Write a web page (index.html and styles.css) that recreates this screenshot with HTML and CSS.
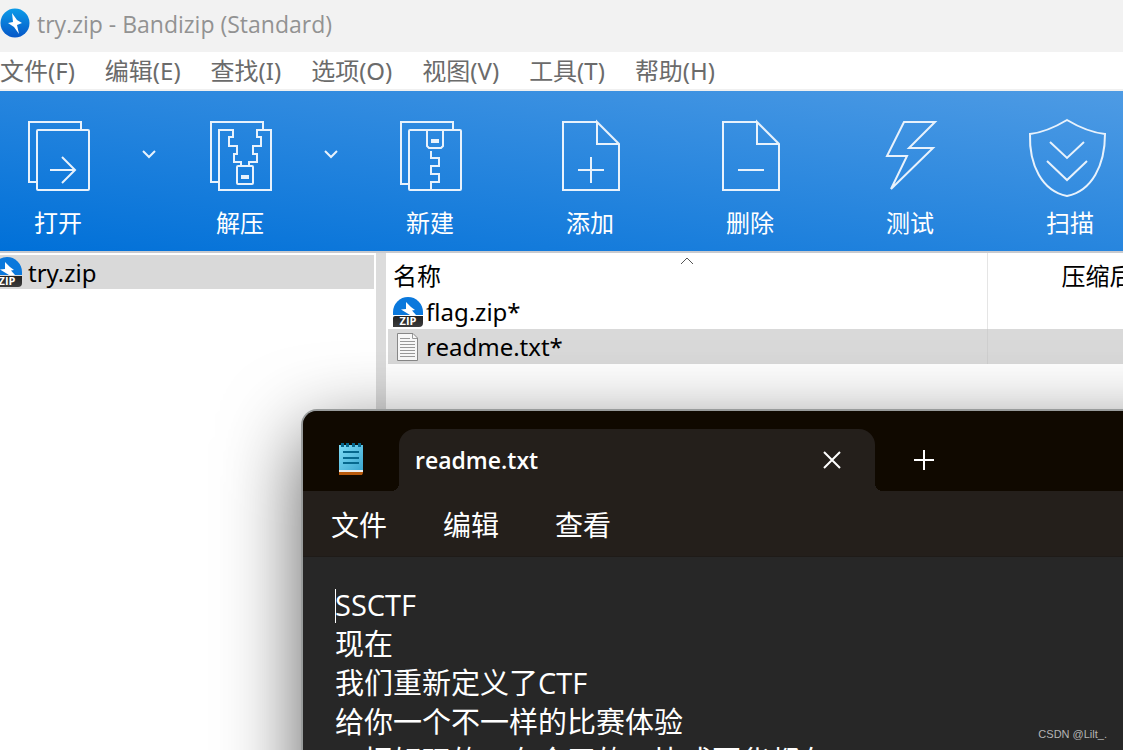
FILE: index.html
```html
<!DOCTYPE html>
<html lang="zh-CN">
<head>
<meta charset="utf-8">
<title>try.zip - Bandizip (Standard)</title>
<link rel="stylesheet" href="styles.css">
</head>
<body>
<svg class="defs" aria-hidden="true">
  <defs>
    <linearGradient id="blue" x1="0" y1="0" x2="0" y2="1"><stop offset="0" stop-color="#0c9be8"/><stop offset="1" stop-color="#0657c8"/></linearGradient>
    <linearGradient id="dark" x1="0" y1="0" x2="0" y2="1"><stop offset="0" stop-color="#222"/><stop offset="1" stop-color="#3c3c3c"/></linearGradient>
    <linearGradient id="paper" x1="0" y1="0" x2="1" y2="1"><stop offset="0" stop-color="#7fdcf7"/><stop offset="1" stop-color="#3ba6cf"/></linearGradient>
    <symbol id="zip" viewBox="0 0 30 30">
      <path d="M0 18V15A15 15 0 0 1 30 15V18Z" fill="#0a78dc"/>
      <path d="M13 5 18 10 22 13 19 13.500 23 18H17L8 12.500 13 12Z" fill="#fff"/>
      <path d="M2 19H30V26Q30 30 26 30H0V21Q0 19 2 19Z" fill="url(#dark)"/>
      <text x="15" y="28" text-anchor="middle" class="zip-label">ZIP</text>
    </symbol>
  </defs>
</svg>
<div class="app">
  <header class="titlebar">
    <svg class="icon30" viewBox="0 0 30 30"><circle cx="15" cy="15" r="14.500" fill="url(#blue)"/><path d="M12 5 17 12 22 15 17 17 19 26 14 19 8 15 13 14Z" fill="#fff"/></svg>
    <h1>try.zip - Bandizip (Standard)</h1>
  </header>
  <nav class="menubar">
    <button>文件(F)</button><button>编辑(E)</button><button>查找(I)</button><button>选项(O)</button><button>视图(V)</button><button>工具(T)</button><button>帮助(H)</button>
  </nav>
  <div class="toolbar">
    <button class="tool first"><svg viewBox="0 0 80 80"><path d="M63 12V4H11V64H19"/><rect x="19" y="12" width="52" height="60" rx="1"/><path d="M32 52H57M44 39 57 52 44 65"/></svg>打开</button>
    <button class="drop" aria-label="打开选项"><svg viewBox="0 0 22 14"><path d="M5 4 11 10 17 4"/></svg></button>
    <button class="tool"><svg viewBox="0 0 80 80"><path d="M63 12V4H11V64H19M41 47V44H34V36H37V28H29V19H33V12H19V72H71V12H57V19H61V28H53V36H57V44H49V47"/><rect x="37" y="48" width="16" height="18" rx="1"/><path class="solid" d="M41 57H49V61H41Z"/></svg>解压</button>
    <button class="drop wide" aria-label="解压选项"><svg viewBox="0 0 22 14"><path d="M5 4 11 10 17 4"/></svg></button>
    <button class="tool"><svg viewBox="0 0 80 80"><path d="M63 12V4H11V66H19"/><rect x="19" y="12" width="52" height="60" rx="1"/><path d="M37 12V28L39 30H51L53 28V12M41 33V40H49V48H41V56H49V64H41V72"/><path class="solid" d="M41 21H49V25H41Z"/></svg>新建</button>
    <button class="tool"><svg viewBox="0 0 80 80"><path d="M47 4H13V72H69V26L47 4V26H69M28 52H54M41 39V65"/></svg>添加</button>
    <button class="tool"><svg viewBox="0 0 80 80"><path d="M47 4H13V72H69V26L47 4V26H69M28 52H54"/></svg>删除</button>
    <button class="tool"><svg viewBox="0 0 80 80"><path d="M34 4H65L39 30H63L21 71 37 38H17Z"/></svg>测试</button>
    <button class="tool"><svg viewBox="0 0 80 80"><path d="M37 2Q17 14 0 16C-1 47 12 73 37 78C62 73 75 47 75 16Q57 14 37 2ZM20 24 37 40 54 24M17 43 37 62 57 43"/></svg>扫描</button>
  </div>
  <main class="content">
    <aside class="tree">
      <button class="node"><svg class="icon30"><use href="#zip"/></svg>try.zip</button>
    </aside>
    <div class="splitter"></div>
    <section class="files">
      <table>
        <colgroup><col class="col-name"><col class="col-size"></colgroup>
        <thead><tr><th>名称<svg class="sort" viewBox="0 0 14 8"><path d="M1 7 7 1 13 7"/></svg></th><th class="size">压缩后</th></tr></thead>
        <tbody>
          <tr><td><div class="file"><svg class="icon30"><use href="#zip"/></svg>flag.zip*</div></td><td></td></tr>
          <tr class="selected"><td><div class="file"><svg class="icon30" viewBox="0 0 30 30"><path d="M4.500 1.500H20L24.500 6V28.500H4.500Z" fill="#f8f8f8" stroke="#888"/><path d="M19.500 2V6.500H24M7 6.500H17M7 9.500H22M7 12.500H22M7 15.500H22M7 18.500H22M7 21.500H22M7 24.500H22" fill="none" stroke="#999"/></svg>readme.txt*</div></td><td></td></tr>
        </tbody>
      </table>
    </section>
  </main>
</div>

<section class="notepad">
  <div class="tabs">
    <svg class="note-icon" viewBox="0 0 26 34"><path d="M1 27H25V31L24 33H1Z" fill="#b85a0c"/><path d="M1 27H25V30H1Z" fill="#eee"/><path d="M1 3H25V28H1Z" fill="url(#paper)"/><path d="M3 1H6V5H3ZM8 1H11V5H8ZM14 1H17V5H14ZM20 1H23V5H20ZM5 9H21V11H5ZM5 15H21V17H5ZM5 20H21V22H5Z" fill="#06688e"/></svg>
    <div class="tab"><span>readme.txt</span><button aria-label="关闭"><svg viewBox="0 0 20 20"><path d="M2 2 18 18M18 2 2 18"/></svg></button></div>
    <button class="add" aria-label="新标签"><svg viewBox="0 0 20 20"><path d="M10 0V20M0 10H20"/></svg></button>
  </div>
  <nav class="note-menu"><button>文件</button><button>编辑</button><button>查看</button></nav>
  <div class="editor">
    <span class="caret"></span>
    <textarea aria-label="readme.txt" spellcheck="false">SSCTF
现在
我们重新定义了CTF
给你一个不一样的比赛体验
一把好玩的一在今天的一比或更华都在</textarea>
  </div>
</section>
<div class="watermark">CSDN @Lilt_.</div>
</body>
</html>
```
FILE: styles.css
```css
* { box-sizing: border-box; }
body {
  margin: 0;
  height: 100vh;
  overflow: hidden;
  position: relative;
  background: #fff;
  font-family: "Noto Sans", "Noto Sans CJK SC", sans-serif;
  font-size: 24px;
}
button {
  margin: 0;
  padding: 0;
  border: 0;
  background: none;
  color: inherit;
  font: inherit;
  white-space: nowrap;
}
svg { display: block; flex: none; }
.defs { position: absolute; width: 0; height: 0; }
.icon30 { width: 30px; height: 30px; }
.zip-label { font: bold 11px "Open Sans", sans-serif; fill: #fff; }

.app { display: flex; flex-direction: column; height: 100%; }
.titlebar {
  flex: none;
  display: flex;
  align-items: center;
  gap: 7px;
  height: 52px;
  padding-bottom: 6px;
  background: #f2f2f2;
  color: #929292;
}
.titlebar h1 { margin: 0; font-size: 23px; font-weight: 400; line-height: 32px; padding-top: 2px; font-family: "Open Sans", sans-serif; }
.menubar {
  flex: none;
  display: flex;
  gap: 30px;
  height: 39px;
  border-bottom: 2px solid #f0f0f0;
  color: #6b6b6b;
  line-height: 36px;
}

.toolbar {
  flex: none;
  display: flex;
  height: 162px;
  overflow: hidden;
  border-bottom: 2px solid #c8cacf;
  background: linear-gradient(to top right, #0070d8, #4e9be4);
  color: #fff;
}
.toolbar svg { fill: none; stroke: #e8f2fc; stroke-width: 2; overflow: visible; }
.toolbar .solid { fill: #e8f2fc; stroke: none; }
.tool {
  flex: none;
  display: flex;
  flex-direction: column;
  align-items: center;
  gap: 8px;
  width: 160px;
  padding-top: 27px;
  line-height: 34px;
}
.tool.first { margin-left: -22px; }
.tool svg { width: 80px; height: 80px; }
.drop { flex: none; display: flex; width: 22px; padding-top: 56px; }
.drop.wide { width: 30px; }
.drop svg { width: 22px; height: 14px; }

.content { flex: 1; display: flex; min-height: 0; color: #000; }
.tree { flex: none; width: 376px; padding: 2px 2px 0 0; }
.node {
  display: flex;
  align-items: center;
  gap: 6px;
  width: 100%;
  height: 34px;
  background: #d9d9d9;
}
.node svg { margin-left: -8px; }
.splitter { flex: none; width: 10px; background: #dcdcdc; }
.files { flex: 1; min-width: 0; padding-left: 2px; overflow: hidden; }
table { width: 100%; border-collapse: collapse; table-layout: fixed; }
.col-name { width: 599px; }
th {
  position: relative;
  height: 41px;
  padding: 4px 0 0 5px;
  font-weight: 400;
  text-align: left;
  line-height: 34px;
  white-space: nowrap;
}
.size { padding-left: 74px; }
.sort { position: absolute; top: 4px; left: 292px; width: 14px; height: 8px; fill: none; stroke: #555; }
td { height: 35px; padding: 0 0 0 5px; }
th + th, td + td { border-left: 1px solid #e5e5e5; }
.selected { background: #d9d9d9; }
.selected td + td { border-color: #cfcfcf; }
.file { display: flex; align-items: center; gap: 3px; line-height: 34px; }

.notepad {
  position: absolute;
  top: 411px;
  right: -100px;
  bottom: -100px;
  left: 303px;
  display: flex;
  flex-direction: column;
  border-radius: 14px 0 0 0;
  background: #272727;
  color: #fff;
  box-shadow: 0 0 0 2px #999c9c, 0 24px 80px rgba(0, 0, 0, 0.65);
}
.tabs {
  flex: none;
  display: flex;
  height: 80px;
  padding: 18px 0 0 35px;
  border-radius: 14px 0 0 0;
  background: #100900;
}
.tabs button svg { width: 20px; height: 20px; fill: none; stroke: #fff; stroke-width: 2; }
.note-icon { width: 26px; height: 34px; margin: 13px 35px 0 0; }
.tab {
  position: relative;
  flex: none;
  display: flex;
  align-items: center;
  justify-content: space-between;
  width: 476px;
  padding: 0 33px 1px 16px;
  border-radius: 16px 16px 0 0;
  background: #241f1b;
  font-family: "Open Sans", sans-serif;
  font-size: 23px;
  font-weight: 600;
}
.tab::before, .tab::after {
  content: "";
  position: absolute;
  bottom: 0;
  width: 8px;
  height: 8px;
}
.tab::before { right: 100%; background: radial-gradient(circle at 0 0, #100900 8px, #241f1b 8px); }
.tab::after { left: 100%; background: radial-gradient(circle at 100% 0, #100900 8px, #241f1b 8px); }
.add { padding: 0 39px; }
.note-menu {
  flex: none;
  display: flex;
  gap: 56px;
  height: 66px;
  padding-left: 28px;
  border-bottom: 1px solid #1f1b18;
  background: #241f1b;
  font-size: 28px;
}
.editor { position: relative; flex: 1; min-height: 0; padding: 28px 0 0 32px; }
.caret { position: absolute; top: 32px; left: 32px; width: 1px; height: 34px; background: #fff; }
textarea {
  display: block;
  width: 100%;
  height: 100%;
  padding: 0;
  border: 0;
  outline: 0;
  resize: none;
  overflow: hidden;
  background: none;
  color: #fff;
  font-family: "Open Sans", "Noto Sans CJK SC", sans-serif;
  font-size: 29px;
  line-height: 39px;
}
.watermark {
  position: absolute;
  right: 16px;
  bottom: 8px;
  color: #b4b4b4;
  font: 11px/16px "Liberation Sans", sans-serif;
}
```
